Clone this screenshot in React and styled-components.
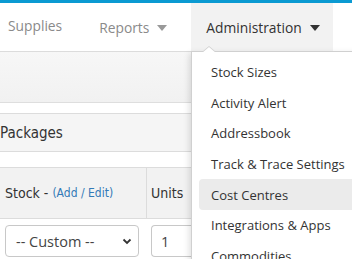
import React from 'react'
import styled, { createGlobalStyle } from 'styled-components'

const GlobalStyle = createGlobalStyle`
  body {
    margin: 0;
    background: #fff;
    font-family: 'Open Sans', sans-serif;
    overflow: hidden;
  }
`

const Page = styled.div`
  width: 352px;
  height: 259px;
  overflow: hidden;
  position: relative;
`

const TopBar = styled.div`
  height: 3px;
  background: #0b9ad2;
`

const Nav = styled.nav`
  position: relative;
  height: 48px;
  display: flex;
  align-items: stretch;
  margin-left: -7px;
  border-bottom: 1px solid #dcdcdc;
`

const NavItem = styled.div`
  display: flex;
  align-items: center;
  gap: 8px;
  padding: 0 ${(p) => p.$pr || 15}px ${(p) => p.$raise || 0}px 15px;
  font-size: 13.8px;
  color: ${(p) => (p.$active ? '#333' : '#8a8a8a')};
  background: ${(p) => (p.$active ? '#f2f2f2' : 'transparent')};
  margin-left: ${(p) => p.$ml || 0}px;
`

const Caret = styled.span`
  width: 0;
  height: 0;
  border-left: 5px solid transparent;
  border-right: 5px solid transparent;
  border-top: 6px solid ${(p) => (p.$dark ? '#333' : '#999')};
  margin-top: 1px;
`

const Dropdown = styled.div`
  position: absolute;
  left: 191px;
  top: 51px;
  width: 175px;
  background: #fff;
  border: 1px solid #d0d0d0;
  box-shadow: -2px 2px 6px rgba(0, 0, 0, 0.12);
  padding: 5px 0 0 7px;
  z-index: 5;

  &::before,
  &::after {
    content: '';
    position: absolute;
    left: 10px;
    width: 0;
    height: 0;
    border-left: 7px solid transparent;
    border-right: 7px solid transparent;
  }
  &::before {
    top: -6px;
    border-bottom: 6px solid #d0d0d0;
  }
  &::after {
    top: -5px;
    border-bottom: 6px solid #fff;
  }
`

const MenuItem = styled.div`
  height: 30.6px;
  display: flex;
  align-items: center;
  padding-left: 12px;
  font-size: 13px;
  color: #333;
  white-space: nowrap;
  border-radius: 4px 0 0 4px;
  background: ${(p) => (p.$hover ? '#ebebeb' : 'transparent')};
`

const Toolbar = styled.div`
  height: 50px;
  background: linear-gradient(#f7f7f7, #f1f1f1);
  border-bottom: 1px solid #dedede;
`

const Spacer = styled.div`
  height: ${(p) => p.$h}px;
`

const PanelHeading = styled.div`
  height: 37px;
  display: flex;
  align-items: center;
  background: #f5f5f5;
  border-top: 1px solid #dcdcdc;
  border-bottom: 1px solid #dcdcdc;
  font-family: 'Liberation Sans Narrow', 'DejaVu Sans Condensed', sans-serif;
  font-stretch: condensed;
  font-size: 15px;
  color: #333;
`

const Table = styled.div`
  border-top: 1px solid #dcdcdc;
`

const HeadRow = styled.div`
  height: 50px;
  display: grid;
  grid-template-columns: 146px 1fr;
  background: #f2f2f2;
  border-bottom: 1px solid #dcdcdc;
`

const HeadCell = styled.div`
  display: flex;
  align-items: center;
  gap: 4px;
  padding-left: ${(p) => p.$pl || 5}px;
  border-left: ${(p) => (p.$divider ? '1px solid #dcdcdc' : 'none')};
  font-family: 'Liberation Sans Narrow', 'DejaVu Sans Condensed', sans-serif;
  font-stretch: condensed;
  font-size: 14px;
  color: #333;
`

const AddEdit = styled.span`
  font-size: 12px;
  color: #337ab7;
`

const BodyRow = styled.div`
  display: grid;
  grid-template-columns: 146px 1fr;
  padding-top: 6px;
`

const Select = styled.div`
  margin-left: 5px;
  width: 134px;
  height: 32px;
  box-sizing: border-box;
  border: 1px solid #c8c8c8;
  border-radius: 4px;
  display: flex;
  align-items: center;
  justify-content: space-between;
  padding: 0 6px 0 10px;
  font-size: 14.5px;
  color: #444;
`

const Input = styled.div`
  margin-left: 5px;
  height: 32px;
  box-sizing: border-box;
  border: 1px solid #c8c8c8;
  border-right: none;
  border-radius: 4px 0 0 4px;
  display: flex;
  align-items: center;
  padding-left: 9px;
  font-size: 14.5px;
  color: #444;
`

const items = [
  'Stock Sizes',
  'Activity Alert',
  'Addressbook',
  'Track & Trace Settings',
  'Cost Centres',
  'Integrations & Apps',
  'Commodities',
]

const App = () => {
  return (
    <Page>
      <GlobalStyle />
      <TopBar />
      <Nav>
        <NavItem $raise={4}>Supplies</NavItem>
        <NavItem $ml={7}>
          Reports <Caret />
        </NavItem>
        <NavItem $active $pr={13} $ml={9}>
          Administration <Caret $dark />
        </NavItem>
      </Nav>
      <Dropdown>
        {items.map((it) => (
          <MenuItem key={it} $hover={it === 'Cost Centres'}>
            {it}
          </MenuItem>
        ))}
      </Dropdown>
      <Toolbar />
      <Spacer $h={10} />
      <PanelHeading>Packages</PanelHeading>
      <Spacer $h={15} />
      <Table>
        <HeadRow>
          <HeadCell $pl={5}>
            Stock - <AddEdit>(Add / Edit)</AddEdit>
          </HeadCell>
          <HeadCell $divider $pl={4}>
            Units
          </HeadCell>
        </HeadRow>
        <BodyRow>
          <Select>
            -- Custom --
            <svg width="10" height="10" viewBox="0 0 10 10">
              <path d="M1.5 3.5 L5 7 L8.5 3.5" fill="none" stroke="#333" strokeWidth="1.8" />
            </svg>
          </Select>
          <Input>1</Input>
        </BodyRow>
      </Table>
    </Page>
  )
}

export default App
